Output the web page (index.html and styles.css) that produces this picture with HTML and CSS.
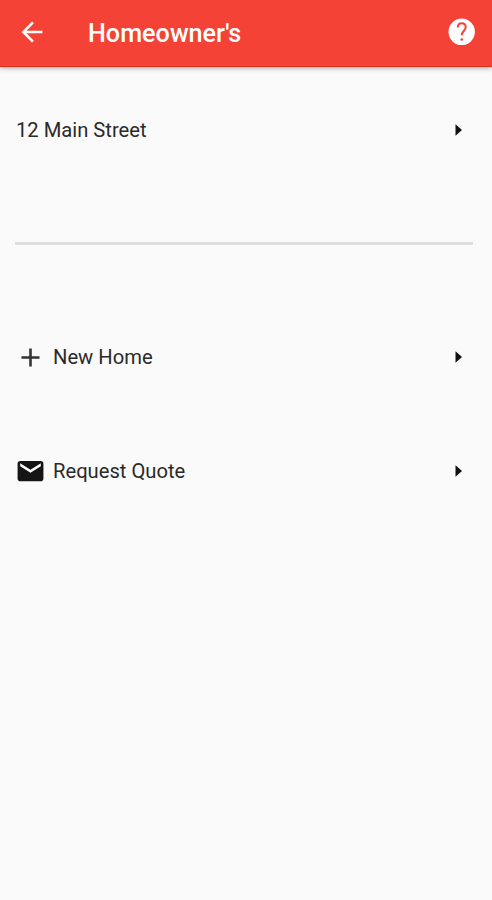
FILE: index.html
```html
<!DOCTYPE html>
<html lang="en">
<head>
    <meta charset="UTF-8">
    <meta name="viewport" content="width=device-width, initial-scale=1.0">
    <title>Homeowner's</title>
    <link rel="stylesheet" href="styles.css">
</head>
<body>
    <header class="topbar">
        <svg class="back" viewBox="0 0 24 24"><path d="M19.8 11H7.83l5.59-5.59L12 4.2l-7.8 7.8 7.8 7.8 1.41-1.21L7.83 13H19.8v-2z"/></svg>
        <h1 class="title">Homeowner's</h1>
        <svg class="help" viewBox="0 0 32 32">
            <circle cx="15.7" cy="15.8" r="13.2"/>
            <path class="mark" d="M11.9 11.4c0-2.5 1.7-4.1 3.9-4.1s3.9 1.6 3.9 4c0 3.3-3.9 3.8-3.9 8"/>
            <circle class="dot" cx="15.8" cy="23.5" r="1.3"/>
        </svg>
    </header>
    <main class="list">
        <div class="row">
            <span class="label address">12 Main Street</span>
            <svg class="arrow" viewBox="0 0 8 12"><path d="M0.5 0.2l6.5 5.8-6.5 5.8z"/></svg>
        </div>
        <div class="divider"></div>
        <div class="row">
            <svg class="icon plus" viewBox="0 0 24 24"><path d="M19 13h-6v6h-2v-6H5v-2h6V5h2v6h6v2z"/></svg>
            <span class="label">New Home</span>
            <svg class="arrow" viewBox="0 0 8 12"><path d="M0.5 0.2l6.5 5.8-6.5 5.8z"/></svg>
        </div>
        <div class="row">
            <svg class="icon" viewBox="0 0 24 24"><path d="M20 3.8H4c-1.1 0-1.99.9-1.99 2L2 17.6c0 1.1.9 2 2 2h16c1.1 0 2-.9 2-2V5.8c0-1.1-.9-2-2-2zm0 4.2l-8 5-8-5V5.7l8 5 8-5v2.3z"/></svg>
            <span class="label">Request Quote</span>
            <svg class="arrow" viewBox="0 0 8 12"><path d="M0.5 0.2l6.5 5.8-6.5 5.8z"/></svg>
        </div>
    </main>
</body>
</html>
```

FILE: styles.css
```css
body{
    margin: 0;
    background-color: #fafafa;
    font-family: Roboto, sans-serif;
    color: #2a2a2a;
}
.topbar{
    display: flex;
    align-items: center;
    box-sizing: border-box;
    height: 67px;
    padding: 0 14px 2px 16px;
    background-color: #f44336;
    border-bottom: 1px solid #e0301e;
    box-shadow: 0 1px 5px rgba(0,0,0,0.35);
    color: #fff;
}
.topbar svg{
    width: 32px;
    height: 32px;
    fill: #fff;
}
.topbar .mark{
    fill: none;
    stroke: #f44336;
    stroke-width: 2;
}
.topbar .dot{
    fill: #f44336;
}
.title{
    flex: 1;
    margin: 0 0 0 40px;
    padding-top: 2px;
    font-size: 25.2px;
    font-weight: 500;
}
.list{
    padding: 6px 19px 0 15px;
}
.row{
    display: flex;
    align-items: center;
    height: 114px;
}
.label{
    flex: 1;
    font-size: 20.2px;
}
.address{
    padding-left: 1px;
}
.icon{
    width: 31px;
    height: 31px;
    margin-right: 7px;
    fill: #151515;
}
.plus{
    fill: #333;
}
.arrow{
    width: 8px;
    height: 12px;
    margin-right: 10px;
    fill: #111;
}
.divider{
    height: 3px;
    margin: 55px 0;
    background-color: #dedede;
}
```
